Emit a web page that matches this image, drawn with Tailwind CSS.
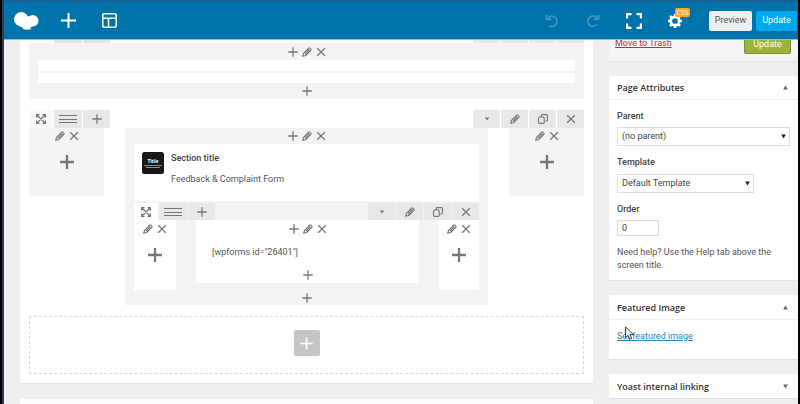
<!DOCTYPE html>
<html lang="en">
<head>
<meta charset="utf-8">
<meta name="viewport" content="width=device-width, initial-scale=1">
<title>Edit Page</title>
<script src="https://cdn.jsdelivr.net/npm/@tailwindcss/browser@4"></script>
</head>
<body class="h-screen overflow-hidden bg-black pr-[2px] pl-[2px] font-['Roboto',sans-serif] text-[9px] leading-[13px] text-[#555]">
<svg class="hidden" aria-hidden="true">
  <symbol id="plus" viewBox="0 0 10 10"><path d="M5 .3v9.400M.3 5h9.400" fill="none" stroke="currentColor" stroke-width="1.300"/></symbol>
  <symbol id="plus-bold" viewBox="0 0 14 14"><path d="M7 0v14M0 7h14" fill="none" stroke="currentColor" stroke-width="2.300"/></symbol>
  <symbol id="close" viewBox="0 0 10 10"><path d="M1.200 1.200l7.600 7.600M8.800 1.200l-7.600 7.600" fill="none" stroke="currentColor" stroke-width="1.300"/></symbol>
  <symbol id="pencil" viewBox="0 0 10 10"><path d="M.7 9.300l.8-3L6.600 1.200q.6-.6 1.200 0l1 1q.6.6 0 1.200L3.700 8.500zM5.700 2.100l2.200 2.200M3 7l3.500-3.500" fill="none" stroke="currentColor" stroke-width="1.150" stroke-linejoin="round"/></symbol>
  <symbol id="copy" viewBox="0 0 10 10"><path d="M3.200 3V1.500q0-.9.900-.9h4.400q.9 0 .9.900v4.600q0 .9-.9.900H7.200" fill="none" stroke="currentColor" stroke-width="1.100"/><rect x=".6" y="3" width="5.600" height="6.400" rx=".9" fill="none" stroke="currentColor" stroke-width="1.100"/></symbol>
  <symbol id="expand" viewBox="0 0 10 10"><path d="M.6 3.500V.6h2.900M6.500.6h2.900v2.900M9.400 6.500v2.900H6.500M3.500 9.400H.6V6.500M1 1l8 8M9 1L1 9" fill="none" stroke="currentColor" stroke-width="1.200"/></symbol>
  <symbol id="lines" viewBox="0 0 18 10"><path d="M0 1.500h18M0 5.500h18M0 8.500h18" fill="none" stroke="currentColor" stroke-width="1"/></symbol>
  <symbol id="caret" viewBox="0 0 6 4"><path d="M.7 .5h4.600L3 3.500z" fill="currentColor"/></symbol>
  <symbol id="tri" viewBox="0 0 6 6"><path d="M.2 .7h5.600L3 5.500z" fill="currentColor"/></symbol>
</svg>
<div class="flex h-full flex-col border-l-2 border-[#3d3558] bg-[#efeff0]">
  <header class="z-10 flex h-[39px] shrink-0 items-center border-t-2 border-[#1c5f95] bg-[#0073aa] pr-px pl-[10px] text-white shadow-[0_1px_0_#8dbdd6]">
    <a href="#" aria-label="Page builder home" class="mr-[22px]">
      <svg class="h-[18px] w-[25px]" viewBox="0 0 25 18" fill="currentColor"><circle cx="7.200" cy="7.200" r="7.100"/><circle cx="18.800" cy="8.800" r="5.700"/><path d="M12 4.500h4v6h-4zM3 12.500Q7 16 11.500 15.500L18 15l1-3-8-4z"/><path d="M8 14.500l8.500-.5q-.6 1.800.8 3.200-4.800 1-8.300-.2z"/></svg>
    </a>
    <button aria-label="Add element" class="mr-[26px]"><svg class="size-[15px]" viewBox="0 0 15 15"><path d="M7.500 0v15M0 7.500h15" stroke="currentColor" stroke-width="2"/></svg></button>
    <button aria-label="Templates"><svg class="size-[15px]" viewBox="0 0 15 15" fill="none" stroke="currentColor" stroke-width="1.500"><rect x=".75" y=".75" width="13.500" height="13.500" rx="1.500"/><path d="M1 5.200h13M6.500 5.200V14"/></svg></button>
    <div class="ml-auto flex items-center">
      <button aria-label="Undo" class="mr-[27px] text-[#3a94c4]"><svg class="size-[14px]" viewBox="0 0 14 14" fill="none" stroke="currentColor" stroke-width="1.900"><path d="M2.500 4.500A5.200 5.200 0 1 1 4 11.700"/><path d="M1.500 .5v4.700h4.700"/></svg></button>
      <button aria-label="Redo" class="mr-[26px] text-[#3a94c4]"><svg class="size-[14px]" viewBox="0 0 14 14" fill="none" stroke="currentColor" stroke-width="1.900"><path d="M11.500 4.500A5.200 5.200 0 1 0 11 10.500"/><path d="M12.500 .5v4.700H7.800"/></svg></button>
      <button aria-label="Full screen" class="mr-[26px]"><svg class="size-4" viewBox="0 0 16 16" fill="none" stroke="currentColor" stroke-width="2.200"><path d="M1.100 5.500V1.100h4.400M10.500 1.100h4.400v4.400M14.900 10.500v4.400h-4.400M5.500 14.900H1.100v-4.400"/></svg></button>
      <button aria-label="Settings" class="relative mr-[27px]"><svg class="size-[14px]" viewBox="0 0 14 14"><circle cx="7" cy="7" r="4.200" fill="none" stroke="currentColor" stroke-width="2.700"/><path d="M7 0v2.500M7 11.500V14M0 7h2.500M11.500 7H14M2 2l1.800 1.800M10.200 10.200L12 12M12 2l-1.800 1.800M3.800 10.200L2 12" stroke="currentColor" stroke-width="2.600"/></svg>
        <span class="absolute -top-[6px] left-[7px] h-[9px] w-[15px] rounded-[2px] bg-[#f9ab14] text-center font-['Open_Sans',sans-serif] text-[7px] leading-[9px] text-white">CSS</span></button>
      <button class="mr-1 h-5 w-[43px] rounded-[2px] bg-[#eee] text-[#555]">Preview</button>
      <button class="h-5 w-[41px] rounded-[2px] bg-[#00a8ef] text-white">Update</button>
    </div>
  </header>

  <div class="flex min-h-0 flex-1 gap-4 pl-4">
    <main class="flex min-w-0 flex-1 flex-col gap-[15px] text-[#777]">
      <section class="border-b border-[#e3e3e4] bg-white px-[9px] pb-[9px]">
        <div class="flex h-[4px] gap-px pl-[25px]">
          <span class="w-7 bg-[#e3e3e3]"></span><span class="w-[27px] bg-[#e3e3e3]"></span>
          <span class="ml-auto w-[27px] bg-[#e8e8e8]"></span><span class="w-[27px] bg-[#e8e8e8]"></span><span class="w-[27px] bg-[#e8e8e8]"></span><span class="w-[27px] bg-[#e8e8e8]"></span>
        </div>
        <div class="bg-[#f3f3f3] px-[9px]">
          <div class="flex h-[17px] items-center justify-center gap-1">
            <button aria-label="Prepend"><svg class="size-[10px]"><use href="#plus"/></svg></button>
            <button aria-label="Edit"><svg class="size-[10px]"><use href="#pencil"/></svg></button>
            <button aria-label="Delete"><svg class="size-[10px]"><use href="#close"/></svg></button>
          </div>
          <div class="h-[11px] bg-white"></div>
          <div class="mt-[2px] h-[10px] bg-white"></div>
          <div class="flex h-4 items-center justify-center"><button aria-label="Append"><svg class="size-[10px]"><use href="#plus"/></svg></button></div>
        </div>

        <div class="mt-[11px] flex h-[18px] gap-px">
          <button aria-label="Move row" class="grid w-6 place-items-center bg-[#f9f9f9]"><svg class="size-[10px]"><use href="#expand"/></svg></button>
          <button aria-label="Row layout" class="grid w-7 place-items-center bg-[#e8e8e8]"><svg class="h-[10px] w-[18px]"><use href="#lines"/></svg></button>
          <button aria-label="Add row" class="grid w-[27px] place-items-center bg-[#e8e8e8]"><svg class="size-[10px]"><use href="#plus"/></svg></button>
          <button aria-label="Toggle row" class="ml-auto grid w-[27px] place-items-center bg-[#e8e8e8]"><svg class="h-1 w-[6px]"><use href="#caret"/></svg></button>
          <button aria-label="Edit row" class="grid w-[27px] place-items-center bg-[#e8e8e8]"><svg class="size-[10px]"><use href="#pencil"/></svg></button>
          <button aria-label="Clone row" class="grid w-[27px] place-items-center bg-[#e8e8e8]"><svg class="size-[10px]"><use href="#copy"/></svg></button>
          <button aria-label="Delete row" class="grid w-[27px] place-items-center bg-[#e8e8e8]"><svg class="size-[10px]"><use href="#close"/></svg></button>
        </div>
        <div class="flex items-start justify-between">
          <div class="w-[75px] bg-[#f3f3f3] pb-[27px]">
            <div class="flex h-4 items-center justify-center gap-1">
              <button aria-label="Edit"><svg class="size-[10px]"><use href="#pencil"/></svg></button>
              <button aria-label="Delete"><svg class="size-[10px]"><use href="#close"/></svg></button>
            </div>
            <button aria-label="Add element" class="mx-auto mt-[11px] block"><svg class="size-[14px]"><use href="#plus-bold"/></svg></button>
          </div>

          <div class="mx-[21px] min-w-0 flex-1 bg-[#f3f3f3] px-[9px]">
            <div class="flex h-4 items-center justify-center gap-1">
              <button aria-label="Prepend"><svg class="size-[10px]"><use href="#plus"/></svg></button>
              <button aria-label="Edit"><svg class="size-[10px]"><use href="#pencil"/></svg></button>
              <button aria-label="Delete"><svg class="size-[10px]"><use href="#close"/></svg></button>
            </div>
            <div class="flex h-[57px] gap-[7px] bg-white px-2 pt-2 text-[#555]">
              <svg class="h-[22px] w-[22px] shrink-0" viewBox="0 0 22 22"><rect width="22" height="22" rx="2.500" fill="#181818"/><text x="11" y="11" font-size="5" font-weight="700" fill="#fff" text-anchor="middle" font-family="Open Sans, sans-serif">Title</text><path d="M2 13.500h18M4 15.500h14" stroke="#999" stroke-width=".9"/></svg>
              <div class="flex flex-col gap-2">
                <h3 class="font-medium text-[#444]">Section title</h3>
                <p>Feedback &amp; Complaint Form</p>
              </div>
            </div>
            <div class="mt-[2px] flex h-[17px] gap-px">
              <button aria-label="Move row" class="grid w-6 place-items-center bg-white"><svg class="size-[10px]"><use href="#expand"/></svg></button>
              <button aria-label="Row layout" class="grid w-7 place-items-center bg-[#e8e8e8]"><svg class="h-[10px] w-[18px]"><use href="#lines"/></svg></button>
              <button aria-label="Add row" class="grid w-[27px] place-items-center bg-[#e8e8e8]"><svg class="size-[10px]"><use href="#plus"/></svg></button>
              <button aria-label="Toggle row" class="ml-auto grid w-[27px] place-items-center bg-[#e8e8e8]"><svg class="h-1 w-[6px]"><use href="#caret"/></svg></button>
              <button aria-label="Edit row" class="grid w-[27px] place-items-center bg-[#e8e8e8]"><svg class="size-[10px]"><use href="#pencil"/></svg></button>
              <button aria-label="Clone row" class="grid w-[27px] place-items-center bg-[#e8e8e8]"><svg class="size-[10px]"><use href="#copy"/></svg></button>
              <button aria-label="Delete row" class="grid w-[27px] place-items-center bg-[#e8e8e8]"><svg class="size-[10px]"><use href="#close"/></svg></button>
            </div>
            <div class="flex items-start justify-between">
              <div class="w-[42px] bg-white pb-7">
                <div class="flex h-[18px] items-center justify-center gap-1">
                  <button aria-label="Edit"><svg class="size-[10px]"><use href="#pencil"/></svg></button>
                  <button aria-label="Delete"><svg class="size-[10px]"><use href="#close"/></svg></button>
                </div>
                <button aria-label="Add element" class="mx-auto mt-[10px] block"><svg class="size-[14px]"><use href="#plus-bold"/></svg></button>
              </div>
              <div class="mx-5 flex min-w-0 flex-1 flex-col bg-white">
                <div class="flex h-[18px] items-center justify-center gap-1">
                  <button aria-label="Prepend"><svg class="size-[10px]"><use href="#plus"/></svg></button>
                  <button aria-label="Edit"><svg class="size-[10px]"><use href="#pencil"/></svg></button>
                  <button aria-label="Delete"><svg class="size-[10px]"><use href="#close"/></svg></button>
                </div>
                <p class="mt-2 px-4 text-[#555]">[wpforms id="26401"]</p>
                <div class="mt-[7px] flex h-[17px] items-center justify-center"><button aria-label="Append"><svg class="size-[10px]"><use href="#plus"/></svg></button></div>
              </div>
              <div class="w-10 bg-white pb-7">
                <div class="flex h-[18px] items-center justify-center gap-1">
                  <button aria-label="Edit"><svg class="size-[10px]"><use href="#pencil"/></svg></button>
                  <button aria-label="Delete"><svg class="size-[10px]"><use href="#close"/></svg></button>
                </div>
                <button aria-label="Add element" class="mx-auto mt-[10px] block"><svg class="size-[14px]"><use href="#plus-bold"/></svg></button>
              </div>
            </div>
            <div class="flex h-[15px] items-center justify-center"><button aria-label="Append"><svg class="size-[10px]"><use href="#plus"/></svg></button></div>
          </div>

          <div class="w-[75px] bg-[#f3f3f3] pb-[27px]">
            <div class="flex h-4 items-center justify-center gap-1">
              <button aria-label="Edit"><svg class="size-[10px]"><use href="#pencil"/></svg></button>
              <button aria-label="Delete"><svg class="size-[10px]"><use href="#close"/></svg></button>
            </div>
            <button aria-label="Add element" class="mx-auto mt-[11px] block"><svg class="size-[14px]"><use href="#plus-bold"/></svg></button>
          </div>
        </div>

        <div class="mt-[11px] grid h-[58px] place-items-center border border-dashed border-[#dadada] pb-1">
          <button aria-label="Add new element" class="grid size-[26px] place-items-center rounded-[2px] bg-[#c5c5c5] text-white"><svg class="size-[13px]"><use href="#plus"/></svg></button>
        </div>
      </section>
      <section class="flex-1 bg-[#fdfdfd]"></section>
    </main>

    <aside class="flex w-[189px] shrink-0 flex-col gap-[14px]">
      <section class="-mt-1 flex h-[27px] items-start justify-between border-b border-[#e0e0e0] bg-[#f5f5f5] pr-[7px] pl-[6px]">
        <a href="#" class="mt-[2px] text-[#a63a4c] underline">Move to Trash</a>
        <button class="h-[19px] w-[47px] rounded-[2px] border border-[#76902b] bg-[#9ab23e] text-white">Update</button>
      </section>

      <section class="border-b border-[#e3e3e4] bg-white">
        <h2 class="flex h-6 items-center justify-between border-b border-[#eee] pr-[10px] pl-2 font-['Open_Sans',sans-serif] font-semibold text-[#333]">Page Attributes
          <button aria-label="Collapse Page Attributes" class="text-[#666]"><svg class="size-[5px] rotate-180"><use href="#tri"/></svg></button></h2>
        <div class="px-2 pt-[10px] pb-2">
          <label for="parent" class="block font-medium text-[#444]">Parent</label>
          <div class="relative mt-1">
            <select id="parent" class="block h-[19px] w-full appearance-none border border-[#ddd] bg-white pl-1 text-[#444]"><option>(no parent)</option></select>
            <svg class="pointer-events-none absolute top-[7px] right-1 size-[5px] text-[#222]"><use href="#tri"/></svg>
          </div>
          <label for="template" class="mt-[10px] block font-medium text-[#444]">Template</label>
          <div class="relative mt-[5px] w-[137px]">
            <select id="template" class="block h-[19px] w-full appearance-none border border-[#ddd] bg-white pl-1 text-[#444]"><option>Default Template</option></select>
            <svg class="pointer-events-none absolute top-[7px] right-1 size-[5px] text-[#222]"><use href="#tri"/></svg>
          </div>
          <label for="order" class="mt-[10px] block font-medium text-[#444]">Order</label>
          <input id="order" type="text" value="0" class="mt-1 block h-4 w-[42px] border border-[#ddd] bg-white pl-1 text-[#444]">
          <p class="mt-[10px]">Need help? Use the Help tab above the screen title.</p>
        </div>
      </section>

      <section class="border-b border-[#e3e3e4] bg-white">
        <h2 class="flex h-[25px] items-center justify-between border-b border-[#eee] pr-[10px] pl-2 font-['Open_Sans',sans-serif] font-semibold text-[#333]">Featured Image
          <button aria-label="Collapse Featured Image" class="text-[#666]"><svg class="size-[5px] rotate-180"><use href="#tri"/></svg></button></h2>
        <div class="relative px-2 pt-[10px] pb-4">
          <a href="#" class="block text-[#2a86b8] underline">Set featured image</a>
          <svg class="absolute top-[6px] left-4 h-[14px] w-[9px]" viewBox="0 0 9 14"><path d="M.6 1v10.600l2.500-2.300 1.700 4 1.900-.8L5 8.700h3.500z" fill="#fff" stroke="#222" stroke-width=".9"/></svg>
        </div>
      </section>

      <section class="border-b border-[#e3e3e4] bg-white">
        <h2 class="flex h-6 items-center justify-between pr-[10px] pl-2 font-['Open_Sans',sans-serif] font-semibold text-[#333]">Yoast internal linking
          <button aria-label="Expand Yoast internal linking" class="text-[#666]"><svg class="size-[5px]"><use href="#tri"/></svg></button></h2>
      </section>
    </aside>
  </div>
</div>
</body>
</html>
